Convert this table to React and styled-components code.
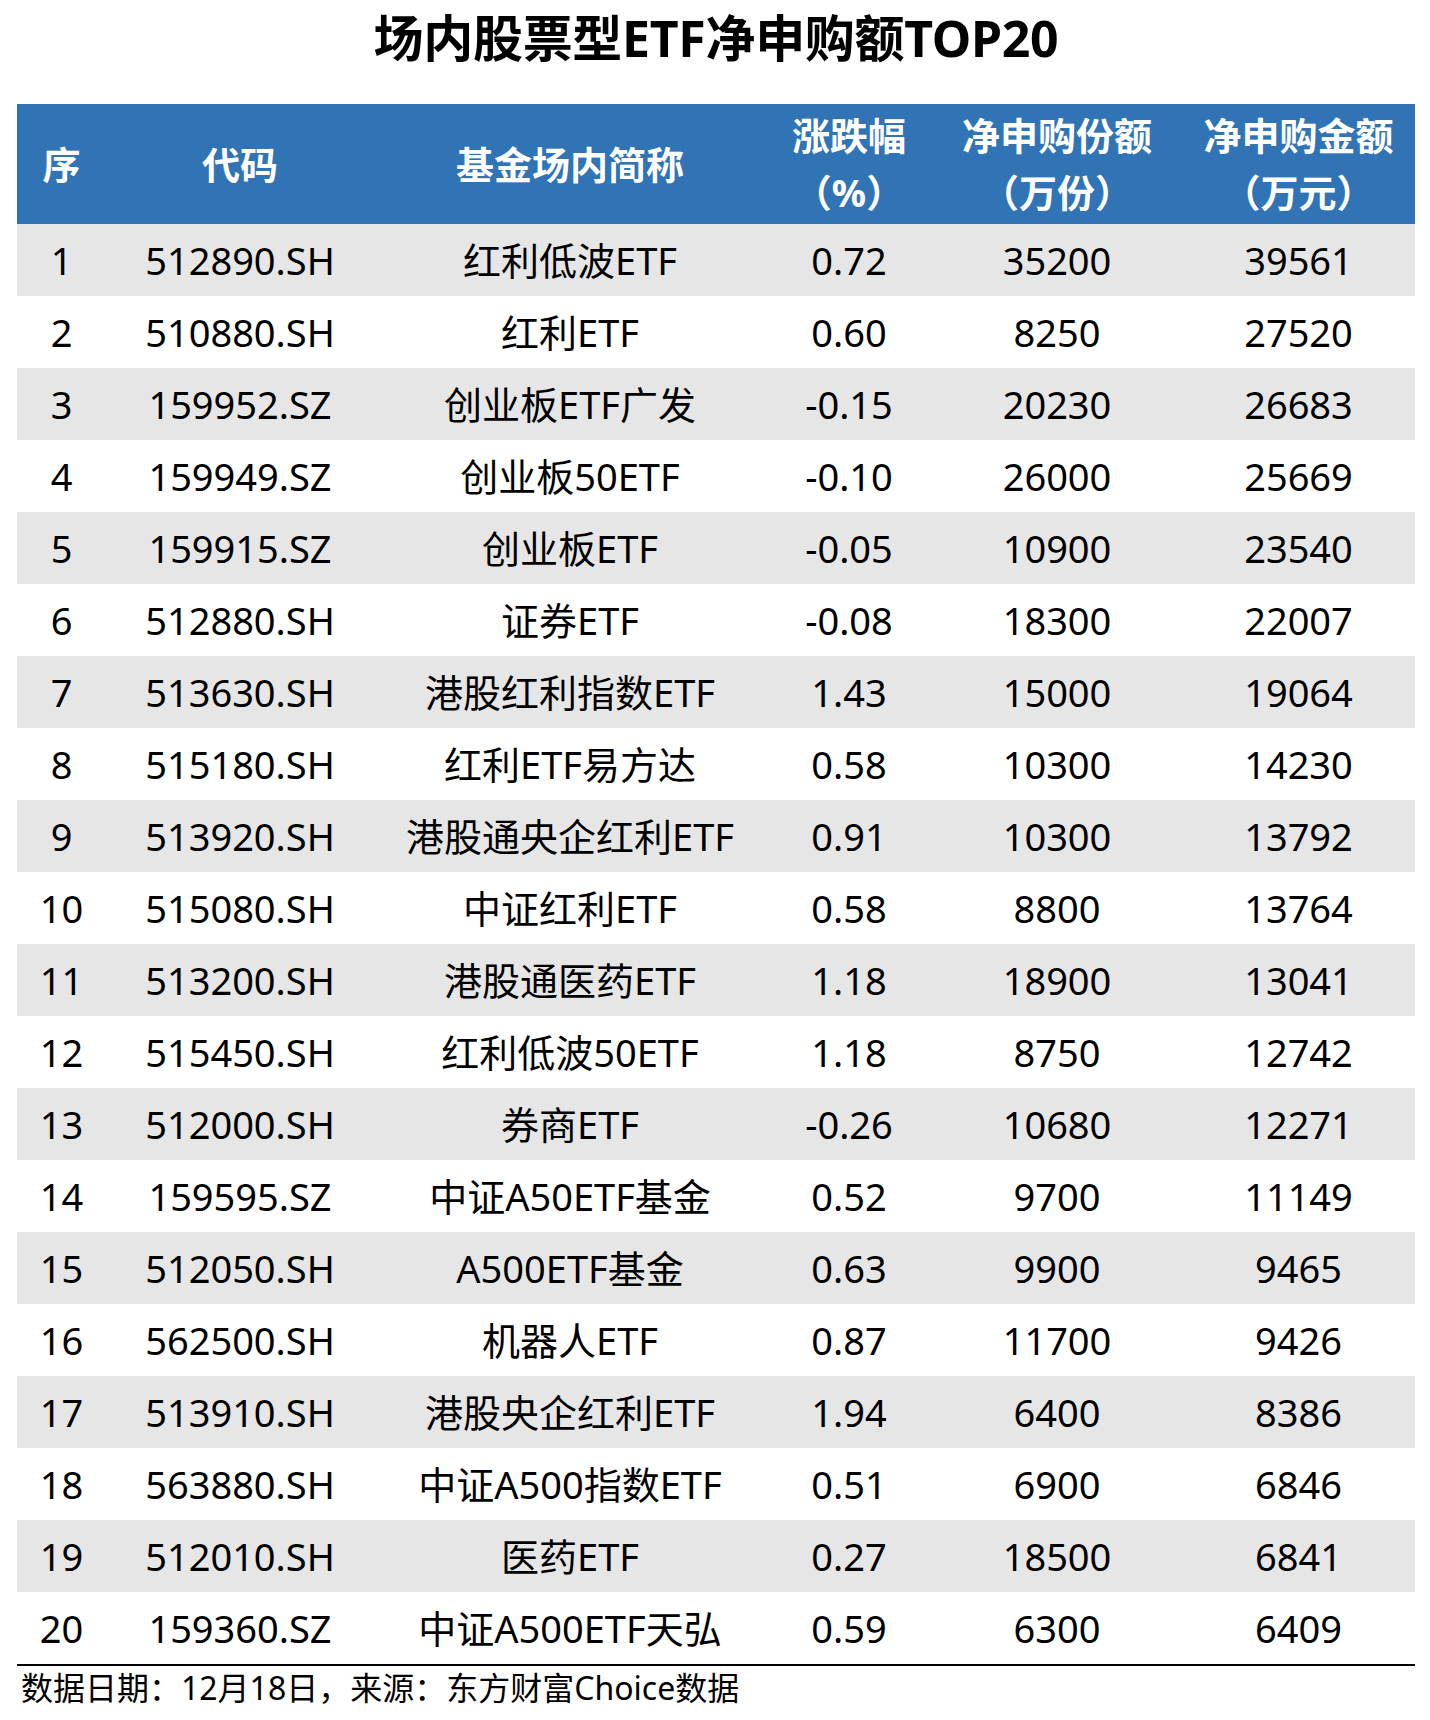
import styled, { createGlobalStyle } from 'styled-components';

const GlobalStyle = createGlobalStyle`
  body {
    margin: 0;
    background: #ffffff;
    font-family: "Noto Sans", "Noto Sans CJK SC", sans-serif;
    color: #000;
  }
`;

const Page = styled.div`
  width: 1430px;
  padding: 0 15px 0 17px;
  box-sizing: border-box;
`;

const Title = styled.h1`
  margin: 0;
  height: 104px;
  padding-top: 12px;
  box-sizing: border-box;
  text-align: center;
  font-size: 50px;
  line-height: 52px;
  font-weight: 700;
  letter-spacing: -0.3px;
`;

const Table = styled.table`
  border-collapse: collapse;
  table-layout: fixed;
  width: 1398px;
`;

const Th = styled.th`
  background-color: #3074b5;
  color: #ffffff;
  height: 120px;
  padding: 0;
  text-align: center;
  font-size: 38px;
  line-height: 57px;
  font-weight: 700;
`;

const Row = styled.tr`
  background-color: ${({ $odd }) => ($odd ? '#e6e6e6' : '#ffffff')};
`;

const Td = styled.td`
  height: 72px;
  padding: 0;
  text-align: center;
  font-size: 38px;
  line-height: 72px;
  white-space: nowrap;
`;

const Footer = styled.div`
  border-top: 2px solid #000;
  width: 1398px;
  font-size: 32px;
  line-height: 44px;
  padding-left: 4px;
  box-sizing: border-box;
`;

const columns = [
  { w: 89, title: ['序'] },
  { w: 268, title: ['代码'] },
  { w: 392, title: ['基金场内简称'] },
  { w: 166, title: ['涨跌幅', '（%）'] },
  { w: 250, title: ['净申购份额', '（万份）'] },
  { w: 233, title: ['净申购金额', '（万元）'] },
];

const rows = [
  ['512890.SH', '红利低波ETF', '0.72', '35200', '39561'],
  ['510880.SH', '红利ETF', '0.60', '8250', '27520'],
  ['159952.SZ', '创业板ETF广发', '-0.15', '20230', '26683'],
  ['159949.SZ', '创业板50ETF', '-0.10', '26000', '25669'],
  ['159915.SZ', '创业板ETF', '-0.05', '10900', '23540'],
  ['512880.SH', '证券ETF', '-0.08', '18300', '22007'],
  ['513630.SH', '港股红利指数ETF', '1.43', '15000', '19064'],
  ['515180.SH', '红利ETF易方达', '0.58', '10300', '14230'],
  ['513920.SH', '港股通央企红利ETF', '0.91', '10300', '13792'],
  ['515080.SH', '中证红利ETF', '0.58', '8800', '13764'],
  ['513200.SH', '港股通医药ETF', '1.18', '18900', '13041'],
  ['515450.SH', '红利低波50ETF', '1.18', '8750', '12742'],
  ['512000.SH', '券商ETF', '-0.26', '10680', '12271'],
  ['159595.SZ', '中证A50ETF基金', '0.52', '9700', '11149'],
  ['512050.SH', 'A500ETF基金', '0.63', '9900', '9465'],
  ['562500.SH', '机器人ETF', '0.87', '11700', '9426'],
  ['513910.SH', '港股央企红利ETF', '1.94', '6400', '8386'],
  ['563880.SH', '中证A500指数ETF', '0.51', '6900', '6846'],
  ['512010.SH', '医药ETF', '0.27', '18500', '6841'],
  ['159360.SZ', '中证A500ETF天弘', '0.59', '6300', '6409'],
];

export default function App() {
  return (
    <Page>
      <GlobalStyle />
      <Title>场内股票型ETF净申购额TOP20</Title>
      <Table>
        <colgroup>
          {columns.map((c, i) => (
            <col key={i} style={{ width: c.w }} />
          ))}
        </colgroup>
        <thead>
          <tr>
            {columns.map((c, i) => (
              <Th key={i}>
                {c.title.map((t, j) => (
                  <div key={j}>{t}</div>
                ))}
              </Th>
            ))}
          </tr>
        </thead>
        <tbody>
          {rows.map((r, i) => (
            <Row key={i} $odd={i % 2 === 0}>
              <Td>{i + 1}</Td>
              {r.map((v, j) => (
                <Td key={j}>{v}</Td>
              ))}
            </Row>
          ))}
        </tbody>
      </Table>
      <Footer>数据日期：12月18日，来源：东方财富Choice数据</Footer>
    </Page>
  );
}
